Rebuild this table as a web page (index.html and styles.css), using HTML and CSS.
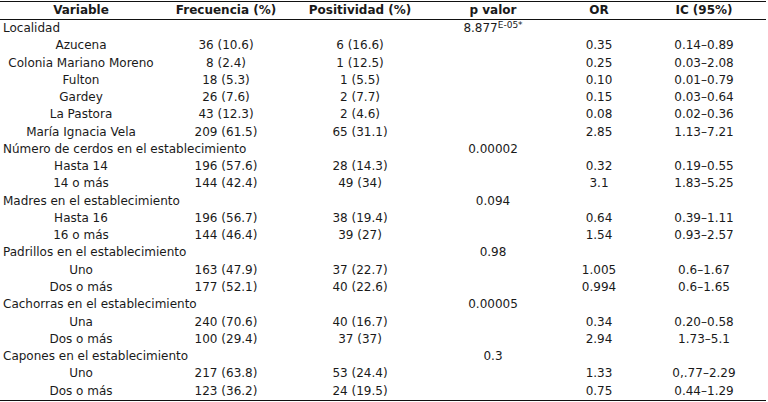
FILE: index.html
```html
<!DOCTYPE html>
<html lang="es">
<head>
<meta charset="utf-8">
<title>Tabla</title>
<link rel="stylesheet" href="styles.css">
</head>
<body>
<table class="data">
  <colgroup>
    <col class="c1"><col class="c2"><col class="c3"><col class="c4"><col class="c5"><col class="c6">
  </colgroup>
  <thead>
    <tr><th>Variable</th><th>Frecuencia (%)</th><th>Positividad (%)</th><th>p valor</th><th>OR</th><th>IC (95%)</th></tr>
  </thead>
  <tbody>
    <tr><td class="cat">Localidad</td><td></td><td></td><td>8.877<sup>E-05*</sup></td><td></td><td></td></tr>
    <tr><td>Azucena</td><td>36 (10.6)</td><td>6 (16.6)</td><td></td><td>0.35</td><td>0.14–0.89</td></tr>
    <tr><td>Colonia Mariano Moreno</td><td>8 (2.4)</td><td>1 (12.5)</td><td></td><td>0.25</td><td>0.03–2.08</td></tr>
    <tr><td>Fulton</td><td>18 (5.3)</td><td>1 (5.5)</td><td></td><td>0.10</td><td>0.01–0.79</td></tr>
    <tr><td>Gardey</td><td>26 (7.6)</td><td>2 (7.7)</td><td></td><td>0.15</td><td>0.03–0.64</td></tr>
    <tr><td>La Pastora</td><td>43 (12.3)</td><td>2 (4.6)</td><td></td><td>0.08</td><td>0.02–0.36</td></tr>
    <tr><td>María Ignacia Vela</td><td>209 (61.5)</td><td>65 (31.1)</td><td></td><td>2.85</td><td>1.13–7.21</td></tr>
    <tr><td class="cat" colspan="3">Número de cerdos en el establecimiento</td><td>0.00002</td><td></td><td></td></tr>
    <tr><td>Hasta 14</td><td>196 (57.6)</td><td>28 (14.3)</td><td></td><td>0.32</td><td>0.19–0.55</td></tr>
    <tr><td>14 o más</td><td>144 (42.4)</td><td>49 (34)</td><td></td><td>3.1</td><td>1.83–5.25</td></tr>
    <tr><td class="cat" colspan="3">Madres en el establecimiento</td><td>0.094</td><td></td><td></td></tr>
    <tr><td>Hasta 16</td><td>196 (56.7)</td><td>38 (19.4)</td><td></td><td>0.64</td><td>0.39–1.11</td></tr>
    <tr><td>16 o más</td><td>144 (46.4)</td><td>39 (27)</td><td></td><td>1.54</td><td>0.93–2.57</td></tr>
    <tr><td class="cat" colspan="3">Padrillos en el establecimiento</td><td>0.98</td><td></td><td></td></tr>
    <tr><td>Uno</td><td>163 (47.9)</td><td>37 (22.7)</td><td></td><td>1.005</td><td>0.6–1.67</td></tr>
    <tr><td>Dos o más</td><td>177 (52.1)</td><td>40 (22.6)</td><td></td><td>0.994</td><td>0.6–1.65</td></tr>
    <tr><td class="cat" colspan="3">Cachorras en el establecimiento</td><td>0.00005</td><td></td><td></td></tr>
    <tr><td>Una</td><td>240 (70.6)</td><td>40 (16.7)</td><td></td><td>0.34</td><td>0.20–0.58</td></tr>
    <tr><td>Dos o más</td><td>100 (29.4)</td><td>37 (37)</td><td></td><td>2.94</td><td>1.73–5.1</td></tr>
    <tr><td class="cat" colspan="3">Capones en el establecimiento</td><td>0.3</td><td></td><td></td></tr>
    <tr><td>Uno</td><td>217 (63.8)</td><td>53 (24.4)</td><td></td><td>1.33</td><td>0,.77–2.29</td></tr>
    <tr><td>Dos o más</td><td>123 (36.2)</td><td>24 (19.5)</td><td></td><td>0.75</td><td>0.44–1.29</td></tr>
  </tbody>
</table>
</body>
</html>
```
FILE: styles.css
```css
html, body {
  margin: 0;
  padding: 0;
  background: #fff;
}
body {
  padding-top: 1px;
  font-family: "DejaVu Sans", Verdana, sans-serif;
  font-size: 12px;
  color: #1a1a1a;
}
.data {
  width: 766px;
  border-collapse: collapse;
  table-layout: fixed;
  border-top: 1px solid #111;
  border-bottom: 1px solid #111;
}
.c1 { width: 162px; }
.c2 { width: 128px; }
.c3 { width: 140px; }
.c4 { width: 126px; }
.c5 { width: 86px; }
.c6 { width: 124px; }
.data th {
  font-weight: bold;
  text-align: center;
  height: 17px;
  padding: 0;
  line-height: 17px;
  border-bottom: 1px solid #111;
}
.data td {
  text-align: center;
  padding: 0;
  height: 17.27px;
  line-height: 17.27px;
  white-space: nowrap;
}
.data td.cat {
  text-align: left;
  padding-left: 3px;
}
.data sup {
  font-size: 9px;
  vertical-align: 4px;
  line-height: 0;
}
```
